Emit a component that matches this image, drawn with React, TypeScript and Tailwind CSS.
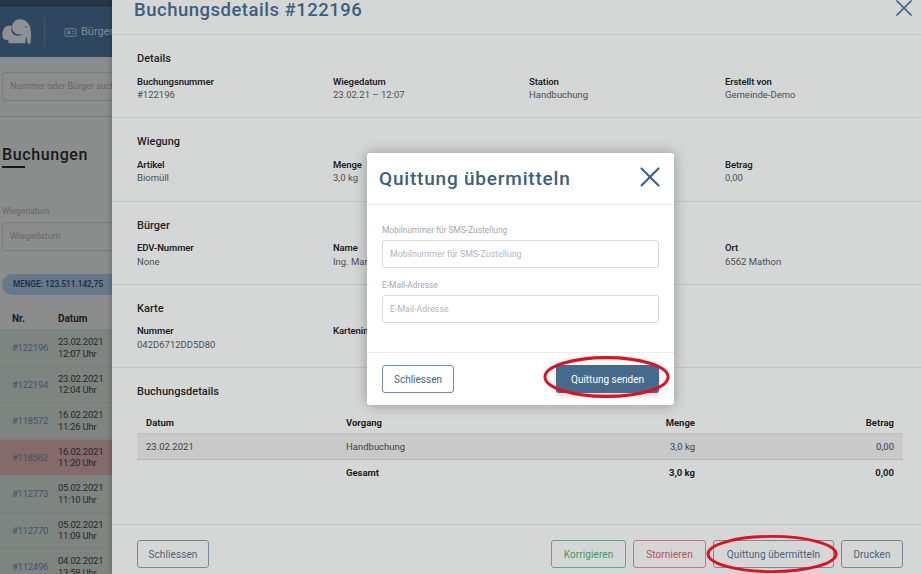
import { X, IdCard } from 'lucide-react';

const font = { fontFamily: 'Roboto, "Noto Sans", sans-serif' };

const rows = [
  { nr: '#122196', date: '23.02.2021', time: '12:07 Uhr' },
  { nr: '#122194', date: '23.02.2021', time: '12:04 Uhr' },
  { nr: '#118572', date: '16.02.2021', time: '11:26 Uhr' },
  { nr: '#118562', date: '16.02.2021', time: '11:20 Uhr', storno: true },
  { nr: '#112773', date: '05.02.2021', time: '11:10 Uhr' },
  { nr: '#112770', date: '05.02.2021', time: '11:09 Uhr' },
  { nr: '#112496', date: '04.02.2021', time: '13:58 Uhr' },
];

function Elephant() {
  return (
    <svg viewBox="0 0 30 26" className="h-[26px] w-[30px]" fill="#8d9194" aria-hidden="true">
      <path d="M.4 16C.4 10.500 3 7 6.500 6.800 8 6.700 9 6.900 10 7.200 11 3 13.500.3 17.500.2c5-.2 9 2.800 10.500 7.500 1.200 4 1.300 10 .6 16-.1 1.200-2.600 1.500-3 .3-.5-2-.8-4.500-1-6.500-.8 2-1.200 4.500-1.300 6.800H6.500c0-1 .1-2-.2-2.600-.4-.8-2-.4-3-.9C1.300 20 .4 18.500.4 16z" />
      <path d="M9.800 7.500c.2 3 1.400 5.800 3.700 7 2 1.100 4.500 1 6.800.6-.5.900-2.400 1.900-4.500 1.700-2.800-.2-5-1.700-6-3.900-.8-1.800-.8-3.700 0-5.400z" fill="#2e4760" />
      <circle cx="24" cy="8" r=".8" fill="#2e4760" />
    </svg>
  );
}

function Field({ label, value }: { label: string; value?: string }) {
  return (
    <div>
      <div className="text-[9.500px] leading-[14px] font-semibold tracking-[-0.1px] whitespace-nowrap text-[#1f2326]">{label}</div>
      {value ? <div className="-mt-[0.5px] text-[9.500px] leading-[14px] whitespace-nowrap text-[#4a4f53]">{value}</div> : null}
    </div>
  );
}

function Section({ title, fields }: { title: string; fields: [string, string?][] }) {
  return (
    <section className="h-[83.330px] shrink-0 border-b border-[#c4c6c5] pt-[16px] pl-[25px]">
      <h3 className="text-[11px] leading-[15px] font-medium text-[#1f2326]">{title}</h3>
      <div className="mt-[8.500px] grid grid-cols-[196px_196px_196px_196px]">
        {fields.map(([label, value], i) => (
          <Field key={i} label={label} value={value} />
        ))}
      </div>
    </section>
  );
}

function OutlineButton({ label, className }: { label: string; className: string }) {
  return (
    <button type="button" className={`h-[28px] rounded-[3px] border bg-transparent text-[10px] tracking-[0.1px] ${className}`}>
      {label}
    </button>
  );
}

function Ring({ className }: { className: string }) {
  return (
    <svg viewBox="0 0 130 40" preserveAspectRatio="none" className={`pointer-events-none absolute ${className}`} aria-hidden="true">
      <ellipse cx="65" cy="20" rx="63" ry="18.500" fill="none" stroke="#e0101f" strokeWidth="3" />
    </svg>
  );
}

function Page() {
  return (
    <div className="flex h-full flex-col overflow-hidden bg-[#8b8c8c] [&>*]:shrink-0">
      <div className="h-[7px] bg-[#253646]" />
      <header className="flex h-[50px] items-center bg-[#2e4760]">
        <div className="flex h-[30px] w-[45px] items-center justify-start border-r border-[#3a5570] pl-[2px]">
          <Elephant />
        </div>
        <div className="ml-[19px] flex items-center gap-[4px] text-[11px] text-[#7f8c99]">
          <IdCard size={13} strokeWidth={1.5} />
          <span>Bürger</span>
        </div>
      </header>
      <div className="h-[60px] border-b border-[#7c7d7d] pt-[15px] pl-[2px]">
        <div className="flex h-[29px] items-center rounded-[3px] border border-[#7c7d7d] pl-[7px] text-[9px] whitespace-nowrap text-[#676869]">
          Nummer oder Bürger suchen
        </div>
      </div>
      <h2 className="mt-[28px] pl-[2px] text-[16px] leading-[20px] font-medium tracking-[0.6px] text-[#17191a]">Buchungen</h2>
      <div className="mt-[1px] ml-[2px] h-[2px] w-[23px] bg-[#17191a]" />
      <div className="mt-[37px] pl-[2px] text-[8.500px] leading-[12px] text-[#676869]">Wiegedatum</div>
      <div className="mt-[5px] ml-[2px] flex h-[29px] items-center rounded-[3px] border border-[#7c7d7d] pl-[7px] text-[9px] text-[#676869]">
        Wiegedatum
      </div>
      <div className="mt-[23px] ml-[2px] flex h-[21px] w-[120px] items-center rounded-full bg-[#66788a] pl-[11px] text-[8.200px] font-semibold whitespace-nowrap text-[#20303e]">
        MENGE: 123.511.142,75
      </div>
      <div className="mt-[17px] flex h-[18px] items-start border-b border-[#7b8079] pl-[12px] text-[10px] leading-[14px] font-bold text-[#1c1e20]">
        <span className="w-[46px]">Nr.</span>
        <span>Datum</span>
      </div>
      {rows.map((row) => (
        <div
          key={row.nr}
          className={`flex h-[36.500px] items-center border-b border-[#778078] pl-[12px] text-[9.500px] leading-[11.500px] tracking-[-0.25px] ${row.storno ? 'bg-[#846a6a]' : 'bg-[#7e8480]'}`}
        >
          <span className="w-[46px] text-[#415468]">{row.nr}</span>
          <span className="text-[#24282a]">
            {row.date}
            <br />
            {row.time}
          </span>
        </div>
      ))}
    </div>
  );
}

const tableCols = 'grid grid-cols-[200px_200px_167px_199px]';

function DetailsPanel() {
  return (
    <aside className="absolute inset-y-0 right-0 left-[112px] flex flex-col bg-[#d5d7d6] shadow-[-2px_0_4px_rgba(0,0,0,0.15)]">
      <div className="flex h-[35px] shrink-0 items-start justify-between border-b border-[#c4c6c5] pr-[3px] pl-[22px]">
        <h1 className="text-[18.500px] leading-[20px] font-medium tracking-[0.5px] text-[#3c5f80]">Buchungsdetails #122196</h1>
        <X size={28} strokeWidth={1.5} className="-mt-[6px] text-[#3c6285]" />
      </div>
      <Section
        title="Details"
        fields={[
          ['Buchungsnummer', '#122196'],
          ['Wiegedatum', '23.02.21 – 12:07'],
          ['Station', 'Handbuchung'],
          ['Erstellt von', 'Gemeinde-Demo'],
        ]}
      />
      <Section
        title="Wiegung"
        fields={[
          ['Artikel', 'Biomüll'],
          ['Menge', '3,0 kg'],
          ['', ''],
          ['Betrag', '0,00'],
        ]}
      />
      <Section
        title="Bürger"
        fields={[
          ['EDV-Nummer', 'None'],
          ['Name', 'Ing. Martin'],
          ['', ''],
          ['Ort', '6562 Mathon'],
        ]}
      />
      <Section
        title="Karte"
        fields={[
          ['Nummer', '042D6712DD5D80'],
          ['Karteninhaber', ''],
        ]}
      />
      <div className="flex-1 pt-[16px] pr-[18px] pl-[25px]">
        <h3 className="text-[11px] leading-[15px] font-medium text-[#1f2326]">Buchungsdetails</h3>
        <div className={`mt-[16px] h-[19px] border-b border-[#bdbfbe] text-[9.500px] leading-[15px] font-bold text-[#1c1e20] ${tableCols}`}>
          <span className="pl-[9px]">Datum</span>
          <span className="pl-[9px]">Vorgang</span>
          <span className="pr-[9px] text-right">Menge</span>
          <span className="pr-[9px] text-right">Betrag</span>
        </div>
        <div className={`h-[26px] items-center border-b border-[#b4b6b5] bg-[#c9c9c9] text-[9.500px] text-[#3d4144] ${tableCols}`}>
          <span className="pl-[9px]">23.02.2021</span>
          <span className="pl-[9px]">Handbuchung</span>
          <span className="pr-[9px] text-right">3,0 kg</span>
          <span className="pr-[9px] text-right">0,00</span>
        </div>
        <div className={`h-[25px] items-center text-[9.500px] font-bold text-[#1c1e20] ${tableCols}`}>
          <span />
          <span className="pl-[9px]">Gesamt</span>
          <span className="pr-[9px] text-right">3,0 kg</span>
          <span className="pr-[9px] text-right">0,00</span>
        </div>
      </div>
      <footer className="flex h-[50px] shrink-0 items-start justify-between border-t border-[#c4c6c5] pt-[15px] pr-[18px] pl-[25px]">
        <OutlineButton label="Schliessen" className="w-[72px] border-[#768a9c] text-[#4b6279]" />
        <div className="flex gap-[7px]">
          <OutlineButton label="Korrigieren" className="w-[75px] border-[#5fa877] text-[#3c9a58]" />
          <OutlineButton label="Stornieren" className="w-[73px] border-[#c9727c] text-[#c04a58]" />
          <OutlineButton label="Quittung übermitteln" className="w-[121px] border-[#768a9c] text-[#4b6279]" />
          <OutlineButton label="Drucken" className="w-[62px] border-[#768a9c] text-[#4b6279]" />
        </div>
      </footer>
    </aside>
  );
}

function ModalField({ label }: { label: string }) {
  return (
    <div>
      <label className="block text-[8.400px] leading-[12px] text-[#a5a8ab]">{label}</label>
      <div className="mt-[4px] flex h-[28px] items-center rounded-[3px] border border-[#d6d8da] pt-[2px] pl-[7px] text-[8.800px] text-[#b4b7ba]">{label}</div>
    </div>
  );
}

function ReceiptModal() {
  return (
    <div className="absolute top-[153px] left-[367px] flex h-[252px] w-[307px] flex-col rounded-[3px] bg-white shadow-[0_0_14px_rgba(0,0,0,0.3)]">
      <div className="flex h-[52px] shrink-0 items-center justify-between border-b border-[#eceded] pr-[7px] pl-[12px]">
        <h2 className="mt-[2px] text-[19px] font-medium tracking-[0.8px] text-[#3c5f80]">Quittung übermitteln</h2>
        <X size={34} strokeWidth={1.5} className="-mt-[3px] text-[#3c6285]" />
      </div>
      <div className="flex h-[148px] shrink-0 flex-col gap-[11px] border-b border-[#eceded] px-[15px] pt-[19px]">
        <ModalField label="Mobilnummer für SMS-Zustellung" />
        <ModalField label="E-Mail-Adresse" />
      </div>
      <div className="flex items-start justify-between px-[15px] pt-[12px]">
        <button type="button" className="h-[28px] w-[72px] rounded-[3px] border border-[#6d8aa6] text-[10px] text-[#46647f]">
          Schliessen
        </button>
        <button type="button" className="h-[28px] w-[103px] rounded-[3px] bg-[#466a8b] text-[10px] text-white shadow-[0_2px_5px_rgba(0,0,0,0.2)]">
          Quittung senden
        </button>
      </div>
    </div>
  );
}

export default function App() {
  return (
    <div className="relative h-[574px] w-[921px] overflow-hidden" style={font}>
      <Page />
      <DetailsPanel />
      <ReceiptModal />
      <Ring className="top-[356px] left-[543px] h-[42px] w-[127px]" />
      <Ring className="top-[535px] left-[706px] h-[38px] w-[132px]" />
    </div>
  );
}
